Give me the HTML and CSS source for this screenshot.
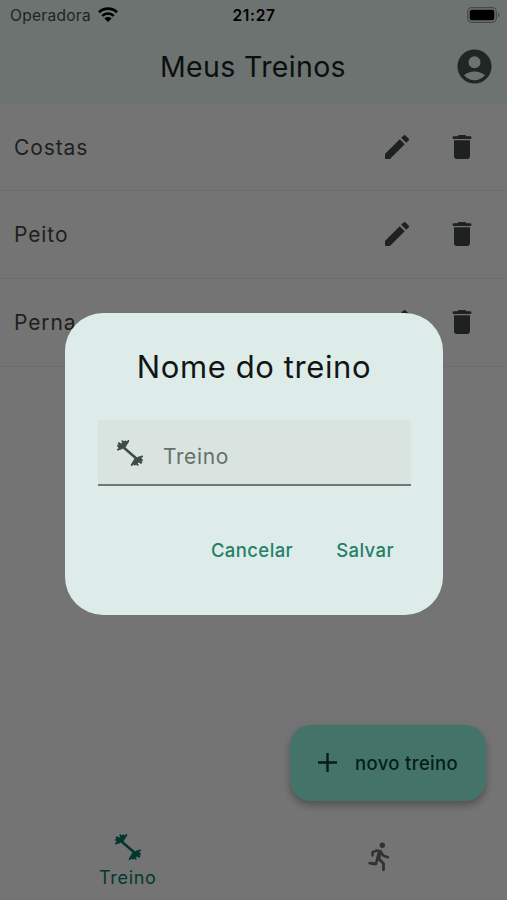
FILE: index.html
```html
<!DOCTYPE html>
<html lang="pt-BR">
<head>
<meta charset="utf-8">
<meta name="viewport" content="width=device-width, initial-scale=1">
<title>Meus Treinos</title>
<link rel="stylesheet" href="styles.css">
</head>
<body>
<svg class="sprite" aria-hidden="true">
  <symbol id="edit" viewBox="0 0 24 24"><path d="M3 17.46v3.04c0 .28.22.5.5.5h3.04c.13 0 .26-.05.35-.15L17.81 9.94l-3.75-3.75L3.15 17.1c-.1.1-.15.22-.15.36zM20.71 7.04a1 1 0 0 0 0-1.41l-2.34-2.34a1 1 0 0 0-1.41 0l-1.83 1.83 3.75 3.75 1.83-1.83z"/></symbol>
  <symbol id="trash" viewBox="0 0 24 24"><path d="M6 19c0 1.1.9 2 2 2h8c1.1 0 2-.9 2-2V7H6v12zM18.5 4h-3l-.71-.71c-.18-.18-.44-.29-.7-.29H9.910c-.26 0-.52.11-.7.29L8.500 4h-3c-.3 0-.5.2-.5.500v1c0 .3.2.5.5.5h13c.3 0 .5-.2.5-.5v-1c0-.3-.2-.5-.5-.5z"/></symbol>
  <symbol id="barbell" viewBox="0 0 28 28"><g fill="none" stroke="currentColor" stroke-linecap="round"><path stroke-width="2.500" d="m3 4.500 22 19"/><path stroke-width="4.200" d="m4.300 8.200 5-4.400M18.700 24.200l5-4.400"/><path stroke-width="1.900" d="M2 6.700 5.500 9.500M1.900 10.600 9.500 7M6.300 2.200 9.500 5M12.300 1.900 8 9M26 21.300 22.500 18.500M26.100 17.400 18.500 21M21.700 25.800 18.500 23M15.700 26.100 20 19"/></g></symbol>
</svg>
<div class="phone">
  <header class="topbar">
    <div class="status">
      <div class="carrier"><span>Operadora</span>
        <svg class="wifi" viewBox="0 0 20 15"><g fill="none" stroke="currentColor" stroke-width="2.700"><path d="M1 5.300a12.800 12.800 0 0 1 18 0"/><path d="M4.200 8.900a8.200 8.200 0 0 1 11.600 0"/></g><path d="M6.400 11.600a5.100 5.100 0 0 1 7.200 0L10 15z"/></svg>
      </div>
      <time class="clock">21:27</time>
      <svg class="battery" viewBox="0 0 33 16"><rect x=".7" y=".7" width="28.600" height="14.600" rx="4.200" fill="none" stroke="#454a48" stroke-width="1.300"/><rect x="2.700" y="2.800" width="24.600" height="10.400" rx="2.200"/><path d="M31 5.500c2 .8 2 4.200 0 5z" fill="#454a48"/></svg>
    </div>
    <div class="titlebar">
      <h1 class="title">Meus Treinos</h1>
      <svg class="account" viewBox="0 0 24 24"><path fill-rule="evenodd" d="M12 2a10 10 0 1 0 0 20 10 10 0 0 0 0-20zm0 4a3.500 3.500 0 1 1 0 7 3.500 3.500 0 0 1 0-7zm0 14c-2.030 0-4.430-.82-6.140-2.880a9.950 9.950 0 0 1 12.280 0C16.430 19.180 14.030 20 12 20z"/></svg>
    </div>
  </header>
  <main class="list">
    <div class="row"><span class="name">Costas</span><svg class="icon"><use href="#edit"/></svg><svg class="icon"><use href="#trash"/></svg></div>
    <div class="row"><span class="name">Peito</span><svg class="icon"><use href="#edit"/></svg><svg class="icon"><use href="#trash"/></svg></div>
    <div class="row"><span class="name">Perna</span><svg class="icon"><use href="#edit"/></svg><svg class="icon"><use href="#trash"/></svg></div>
  </main>
  <nav class="tabs">
    <div class="tab active"><svg class="tab-icon"><use href="#barbell"/></svg><span>Treino</span></div>
    <div class="tab"><svg class="runner" viewBox="0 0 24 30"><circle cx="14.300" cy="3.300" r="2.700"/><g fill="none" stroke="currentColor" stroke-linecap="round" stroke-linejoin="round"><path stroke-width="2.500" d="M4.500 13.500V10.200l4.500-1.700 3.500 1 3 4.200 4.500 1.500"/><path stroke-width="4.400" d="m12 10-1.800 6.500"/><path stroke-width="2.800" d="m11 17 4.500 4.500v6.300M9.700 16.500l-2 5.500-6-.9"/></g></svg></div>
  </nav>
  <button class="fab"><svg class="plus" viewBox="0 0 20 20"><path d="M10 0v20M0 10h20" stroke="currentColor" stroke-width="2.500"/></svg><span>novo treino</span></button>
  <section class="dialog" role="dialog">
    <h2 class="dialog-title">Nome do treino</h2>
    <div class="field"><svg class="field-icon"><use href="#barbell"/></svg><span>Treino</span></div>
    <div class="actions"><button class="action">Cancelar</button><button class="action">Salvar</button></div>
  </section>
</div>
</body>
</html>
```
FILE: styles.css
```css
* { box-sizing: border-box; }
body { margin: 0; font-family: Inter, "Liberation Sans", sans-serif; }
h1, h2 { margin: 0; font-weight: 400; }
button { border: 0; padding: 0; background: none; font: inherit; letter-spacing: inherit; }
svg { display: block; fill: currentColor; flex: none; }
.sprite { position: absolute; width: 0; height: 0; }
.phone { position: relative; width: 507px; height: 900px; overflow: hidden; display: flex; flex-direction: column; background: #747474; color: #1d2120; }
.topbar { height: 104px; background: #6c7371; color: #0c0f0e; }
.status { height: 29px; padding: 0 7px 0 10px; display: grid; grid-template-columns: 1fr auto 1fr; align-items: center; }
.carrier { display: flex; align-items: center; gap: 7px; font-size: 15.5px; letter-spacing: .3px; color: #202423; }
.carrier span { padding-top: 1px; }
.wifi { width: 20px; height: 15px; color: #000; }
.clock { font-size: 15.5px; font-weight: 600; letter-spacing: .7px; color: #000; margin-right: 2px; padding-top: 1px; }
.battery { width: 33px; height: 16px; justify-self: end; color: #000; }
.titlebar { height: 74px; padding: 0 12px 0 52px; display: flex; align-items: center; }
.title { flex: 1; text-align: center; font-size: 28.5px; line-height: 40px; letter-spacing: .35px; padding-top: 1px; }
.account { width: 41px; height: 41px; color: #202624; }
.row { height: 88px; padding: 0 29px 2px 14px; display: flex; align-items: center; gap: 33px; border-bottom: 1px solid #6a6d6c; }
.list .row:first-child { height: 87px; padding-bottom: 0; }
.name { flex: 1; font-size: 21px; letter-spacing: .9px; padding-top: 2px; }
.list .row:first-child .name { padding-top: 1px; }
.icon { width: 32px; height: 32px; }
.tabs { margin-top: auto; height: 72px; display: grid; grid-template-columns: 1fr 1fr; color: #303332; }
.tab { display: flex; flex-direction: column; align-items: center; }
.active { color: #03382c; font-size: 18px; letter-spacing: .7px; padding-left: 2px; }
.tab-icon { width: 28px; height: 28px; margin: 5px 0 6px; }
.runner { width: 24px; height: 30px; margin-top: 14px; }
.fab { position: absolute; left: 290px; top: 725px; width: 196px; height: 76px; padding-left: 28px; display: flex; align-items: center; gap: 18px; border-radius: 21px; background: #44736a; color: #071d18; font-size: 18.5px; font-weight: 500; letter-spacing: .35px; box-shadow: 0 5px 7px rgba(0,0,0,.22), 0 2px 9px rgba(0,0,0,.08); }
.plus { width: 19px; height: 19px; margin-top: -1px; }
.fab span { margin-top: -1px; }
.dialog { position: absolute; left: 65px; top: 313px; width: 378px; height: 302px; padding: 33px 32px 0 33px; border-radius: 38px; background: #deece9; color: #111615; }
.dialog-title { text-align: center; font-size: 31px; line-height: 42px; letter-spacing: .6px; margin-right: 1px; }
.field { height: 66px; margin-top: 32px; padding: 4px 18px 0; display: flex; align-items: center; gap: 19px; background: #d9e4e0; border-bottom: 2px solid #697a75; color: #65706c; font-size: 21px; letter-spacing: .6px; }
.field span { padding-top: 4px; }
.field-icon { width: 28px; height: 28px; margin-top: -2px; color: #3f4c47; }
.actions { height: 60px; margin-top: 34px; padding-right: 17px; display: flex; justify-content: flex-end; align-items: center; gap: 43px; color: #24806b; font-size: 18.5px; font-weight: 500; letter-spacing: .4px; }
.action { color: inherit; }
```
